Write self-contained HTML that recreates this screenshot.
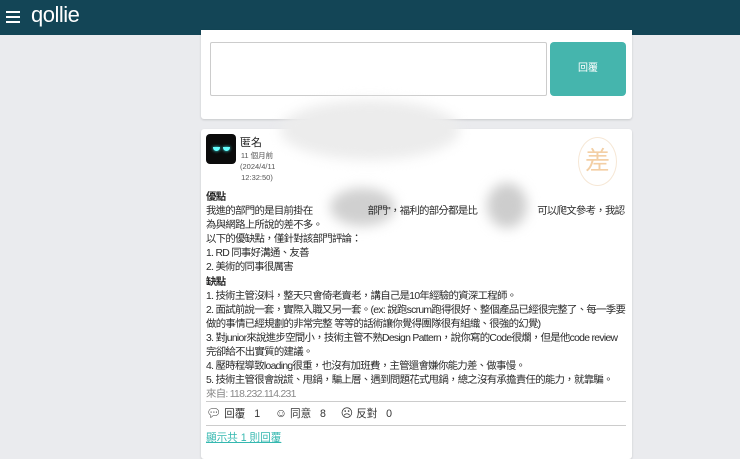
<!DOCTYPE html>
<html><head><meta charset="utf-8"><style>
*{margin:0;padding:0;box-sizing:border-box}
body{width:740px;height:453px;overflow:hidden;background:#eaebee;font-family:"Liberation Sans","Noto Sans CJK TC",sans-serif;color:#222;position:relative}
.hdr{position:absolute;left:0;top:0;width:740px;height:35px;background:#134556}
.hdr .m{position:absolute;left:6px;width:14px;height:1.5px;background:#fff}
.hdr .logo{position:absolute;left:31px;top:2px;color:#fff;font-size:22px;letter-spacing:-0.5px}
.card{position:absolute;background:#fff;border-radius:3px;box-shadow:0 1px 2px rgba(0,0,0,.15)}
.ta{position:absolute;left:210px;top:42px;width:337px;height:54px;border:1px solid #ccc;border-radius:2px;background:#fff}
.btn{position:absolute;left:550px;top:42px;width:76px;height:54px;background:#45b5ad;border-radius:4px;color:#fff;font-size:10px;text-align:center;line-height:54px}
.av{position:absolute;left:206px;top:134px;width:30px;height:30px;background:#0b0b0b;border-radius:4px}
.av i{position:absolute;top:13px;width:7px;height:4px;background:#6ff;border-radius:0 0 4px 4px;box-shadow:0 0 3px #4ee}
.txt{position:absolute;left:206px;top:191px;width:430px;font-size:10.4px;line-height:14.1px;color:#2a2a2a;letter-spacing:-0.7px}
.txt div{white-space:nowrap;height:14.1px}
.blur{position:absolute;background:#ddd;filter:blur(6px);border-radius:50%}
</style></head><body>
<div class="hdr">
<div class="m" style="top:11px"></div><div class="m" style="top:16px"></div><div class="m" style="top:21px"></div>
<div class="logo">qollie</div>
</div>
<div class="card" style="left:201px;top:30px;width:431px;height:89px;border-radius:0 0 3px 3px"></div>
<div class="ta"></div>
<div class="btn">回覆</div>
<div class="card" style="left:201px;top:129px;width:431px;height:330px"></div>
<div class="av"><i style="left:7px"></i><i style="left:17px"></i></div>
<div style="position:absolute;left:240px;top:134px;font-size:11px">匿名</div>
<div style="position:absolute;left:240px;top:150px;font-size:7.5px;line-height:11px;color:#555;width:34px;text-align:center">11 個月前<br>(2024/4/11<br>12:32:50)</div>
<div style="position:absolute;left:578px;top:137px;width:39px;height:49px;border:1px solid #f6e7d5;border-radius:50%;color:#f3cfa5;font-size:25px;text-align:center;line-height:47px">差</div>
<div class="blur" style="left:280px;top:100px;width:180px;height:60px;background:#ececec"></div>
<div class="blur" style="left:330px;top:188px;width:65px;height:38px;background:#d0d0d0"></div>
<div class="blur" style="left:487px;top:183px;width:40px;height:45px;background:#cdcdcd"></div>
<div class="txt">
<div><b>優點</b></div>
<div>我進的部門的是目前掛在<span style="display:inline-block;width:55px"></span>部門"，福利的部分都是比<span style="display:inline-block;width:60px"></span>可以爬文參考，我認</div>
<div>為與網路上所說的差不多。</div>
<div>以下的優缺點，僅針對該部門評論：</div>
<div>1. RD 同事好溝通、友善</div>
<div>2. 美術的同事很厲害</div>
<div><b>缺點</b></div>
<div>1. 技術主管沒料，整天只會倚老賣老，講自己是10年經驗的資深工程師。</div>
<div>2. 面試前說一套，實際入職又另一套。(ex: 說跑scrum跑得很好、整個產品已經很完整了、每一季要</div>
<div>做的事情已經規劃的非常完整 等等的話術讓你覺得團隊很有組織、很強的幻覺)</div>
<div>3. 對junior來說進步空間小，技術主管不熟Design Pattern，說你寫的Code很爛，但是他code review</div>
<div>完卻給不出實質的建議。</div>
<div>4. 壓時程導致loading很重，也沒有加班費，主管還會嫌你能力差、做事慢。</div>
<div>5. 技術主管很會說謊、甩鍋，騙上層、遇到問題花式甩鍋，總之沒有承擔責任的能力，就靠騙。</div>
<div style="color:#888">來自: 118.232.114.231</div>
</div>
<div style="position:absolute;left:206px;top:401px;width:420px;height:1px;background:#ccc"></div>
<div style="position:absolute;left:206px;top:406px;font-size:10.6px;color:#333;white-space:nowrap"><span style="font-size:12px">💬︎</span> 回覆&nbsp;&nbsp; 1 &nbsp;&nbsp;&nbsp; <span style="font-size:12px">☺</span> 同意&nbsp;&nbsp; 8 &nbsp;&nbsp;&nbsp; <span style="font-size:12px">☹</span> 反對&nbsp;&nbsp; 0</div>
<div style="position:absolute;left:206px;top:425px;width:420px;height:1px;background:#ccc"></div>
<div style="position:absolute;left:206px;top:430px;font-size:10.6px;color:#35b8b0;text-decoration:underline">顯示共 1 則回覆</div>
</body></html>
